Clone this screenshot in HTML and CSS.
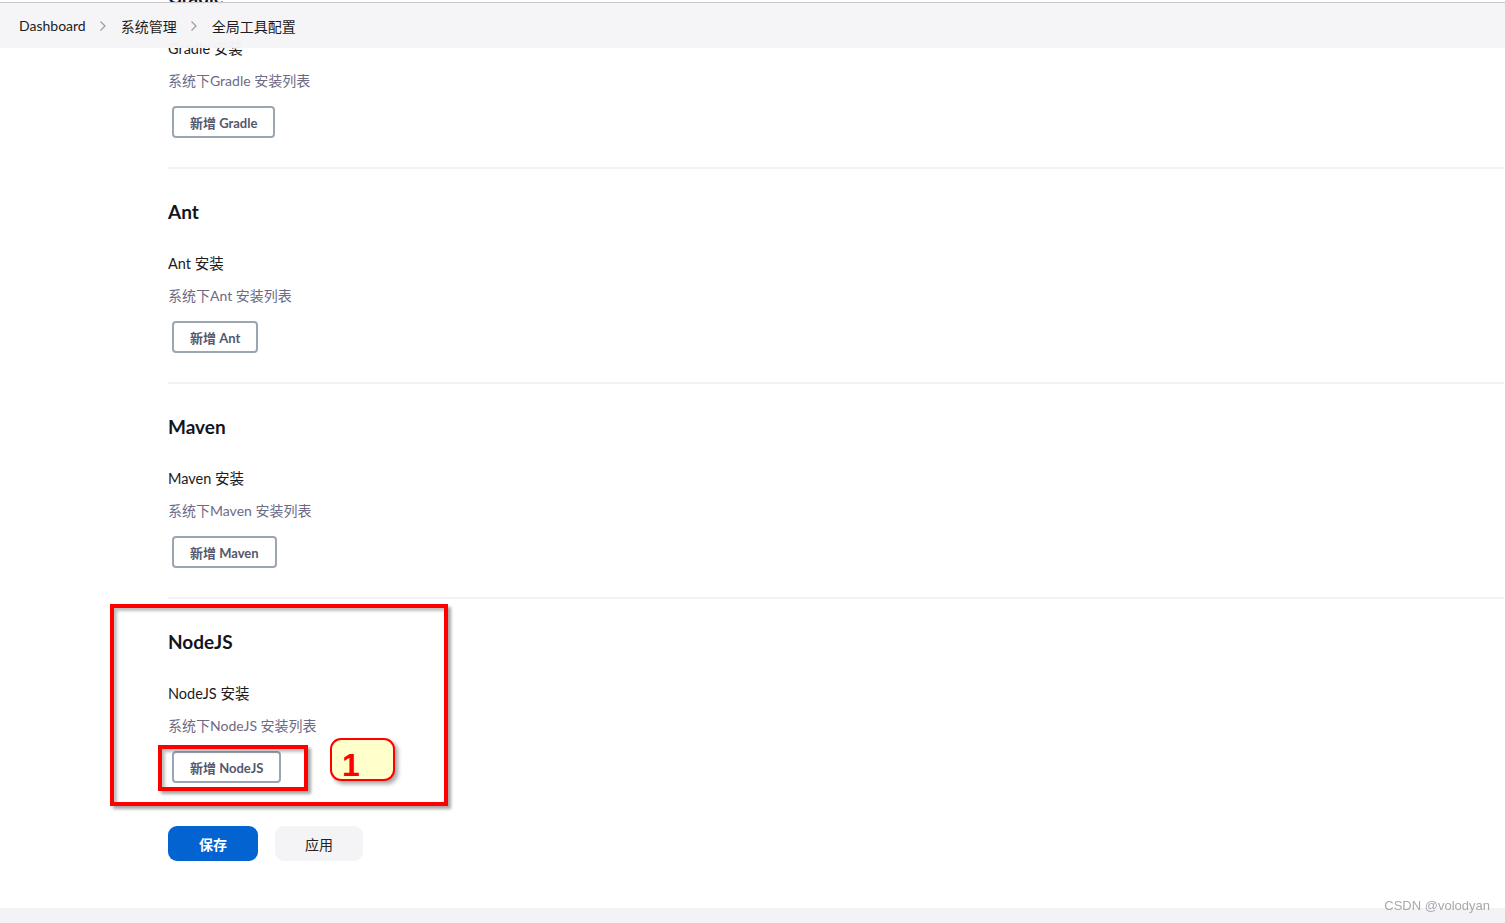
FILE: index.html
```html
<!DOCTYPE html>
<html lang="zh-CN">
<head>
  <meta charset="UTF-8">
  <title>全局工具配置 - Jenkins</title>
  <link rel="stylesheet" href="styles.css">
</head>
<body>
  <div class="page">
    <div class="main">
      <div class="section">
        <div class="section-title">Gradle</div>
        <div class="field-label">Gradle 安装</div>
        <div class="field-desc">系统下Gradle 安装列表</div>
        <button class="add-btn">新增 Gradle</button>
      </div>
      <div class="section">
        <div class="section-title">Ant</div>
        <div class="field-label">Ant 安装</div>
        <div class="field-desc">系统下Ant 安装列表</div>
        <button class="add-btn">新增 Ant</button>
      </div>
      <div class="section">
        <div class="section-title">Maven</div>
        <div class="field-label">Maven 安装</div>
        <div class="field-desc">系统下Maven 安装列表</div>
        <button class="add-btn">新增 Maven</button>
      </div>
      <div class="section last">
        <div class="section-title">NodeJS</div>
        <div class="field-label">NodeJS 安装</div>
        <div class="field-desc">系统下NodeJS 安装列表</div>
        <button class="add-btn">新增 NodeJS</button>
      </div>
      <div class="actions">
        <button class="btn-save">保存</button>
        <button class="btn-apply">应用</button>
      </div>
    </div>
    <div class="footer"></div>
  </div>

  <div class="breadcrumb-bar">
    <span class="crumb">Dashboard</span>
    <svg class="chevron" width="8" height="12" viewBox="0 0 8 12"><path d="M1.5 1.5 L6 6 L1.5 10.5" fill="none" stroke="#9a9a9a" stroke-width="1.2"/></svg>
    <span class="crumb">系统管理</span>
    <svg class="chevron" width="8" height="12" viewBox="0 0 8 12"><path d="M1.5 1.5 L6 6 L1.5 10.5" fill="none" stroke="#9a9a9a" stroke-width="1.2"/></svg>
    <span class="crumb">全局工具配置</span>
  </div>

  <!-- screenshot annotations -->
  <div class="mark mark-big"></div>
  <div class="mark mark-small"></div>
  <div class="callout">1</div>
  <div class="watermark">CSDN @volodyan</div>
</body>
</html>
```

FILE: styles.css
```css
body {
  margin: 0;
  font-family: Lato, "Noto Sans CJK SC", sans-serif;
  color: #1b1b22;
  background: #fff;
  overflow: hidden;
  height: 923px;
}

.page {
  min-height: 923px;
}

.main {
  margin: -15px 1px 0 168px;
}

.section {
  padding: 31px 0 29px;
  border-top: 2px solid #f1f1f6;
  border-radius: 1px;
}

.section:first-child {
  border-top: none;
  padding-top: 0;
  padding-bottom: 29px;
}

.section.last {
  padding-bottom: 0;
}

.section-title {
  font-size: 19px;
  line-height: 24px;
  font-weight: bold;
  color: #14141c;
}

.field-label {
  margin-top: 30px;
  font-size: 14.5px;
  line-height: 20px;
  color: #1b1b22;
}

.field-desc {
  margin-top: 12px;
  font-size: 14px;
  line-height: 20px;
  color: #6e6a85;
}

.add-btn {
  display: block;
  margin: 15px 0 0 4px;
  height: 32px;
  padding: 0 16px;
  border: 2px solid #9ca6b2;
  border-radius: 4px;
  background: #fff;
  font-family: inherit;
  font-size: 13px;
  font-weight: bold;
  color: #55576c;
}

.actions {
  display: flex;
  gap: 17px;
  padding-top: 43px;
}

.btn-save, .btn-apply {
  height: 35px;
  border: none;
  border-radius: 9px;
  font-family: inherit;
  font-size: 14px;
}

.btn-save {
  width: 90px;
  background: #0263d1;
  color: #fff;
  font-weight: bold;
}

.btn-apply {
  width: 88px;
  background: #f4f4f7;
  color: #222;
}

.footer {
  position: fixed;
  left: 0;
  right: 0;
  top: 908px;
  height: 15px;
  background: #f3f3f6;
}

.breadcrumb-bar {
  position: absolute;
  top: 2px;
  left: 0;
  right: 0;
  height: 45px;
  border-top: 1px solid #c8c8cc;
  background: rgba(245, 245, 247, 0.97);
  display: flex;
  align-items: center;
  padding-left: 19px;
  font-size: 14px;
}

.crumb {
  color: #1b1b22;
}

.chevron {
  margin: 0 14px 0 13px;
}

.mark {
  position: absolute;
  border: 4px solid #ff0000;
  box-shadow: 3px 3px 3px rgba(0, 0, 0, 0.35), inset 3px 3px 3px rgba(0, 0, 0, 0.25);
}

.mark-big {
  left: 110px;
  top: 604px;
  width: 330px;
  height: 194px;
}

.mark-small {
  left: 158px;
  top: 745px;
  width: 142px;
  height: 38px;
}

.callout {
  position: absolute;
  left: 330px;
  top: 738px;
  height: 39px;
  border: 2px solid #ff0000;
  border-radius: 11px;
  background: #ffffcc;
  box-shadow: 3px 3px 4px rgba(0, 0, 0, 0.35);
  color: #ff0000;
  font-family: "Liberation Sans", Arial, sans-serif;
  font-weight: bold;
  font-size: 32px;
  line-height: 50px;
  padding-left: 10px;
  width: 51px;
}

.watermark {
  position: absolute;
  right: 15px;
  top: 898px;
  font-family: "Liberation Sans", Arial, sans-serif;
  font-size: 13px;
  color: #a8a8ad;
}
```
